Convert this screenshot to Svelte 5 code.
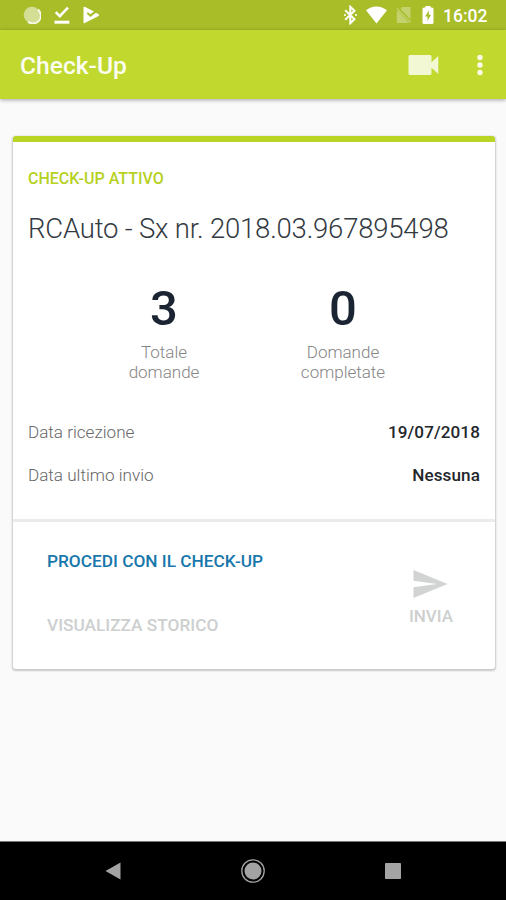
<script lang="ts">
  const stats = [
    { value: 3, lines: ['Totale', 'domande'] },
    { value: 0, lines: ['Domande', 'completate'] },
  ];

  const dates = [
    { label: 'Data ricezione', value: '19/07/2018' },
    { label: 'Data ultimo invio', value: 'Nessuna' },
  ];
</script>

<div class="screen">
  <!-- Status bar -->
  <div class="status">
    <div class="status-left">
      <svg width="18" height="18" viewBox="0 0 18 18">
        <circle cx="9" cy="9" r="8.3" fill="#fff" opacity=".5" />
        <path d="M15 3.5A7.8 7.8 0 0 1 5 15.7" fill="none" stroke="#fff" stroke-width="1.8" opacity=".9" />
      </svg>
      <svg width="16" height="18" viewBox="0 0 16 18" fill="none" stroke="#fff">
        <path d="M1.7 6.2l4.1 4L14 1.6" stroke-width="2.5" />
        <path d="M.5 16.2h14.8" stroke-width="3" />
      </svg>
      <svg width="17" height="18" viewBox="0 0 17 18">
        <path d="M1.7.8Q.5.5.5 1.8v14.4q0 1.5 1.3.9L15.6 9.9q1.2-.9 0-1.7L13 6.8 7.3 11 3.6 7.6 5 6.2l2.3 2L11 5.5z" fill="#fff" />
      </svg>
    </div>
    <div class="status-right">
      <svg class="bluetooth" width="13" height="20" viewBox="0 0 13 20" fill="none" stroke="#fff" stroke-width="2">
        <path d="M1.2 5.2l9.3 9-4.2 4V1.8l4.2 4-9.3 9" />
        <path d="M.2 10h1.6M11.200 10h1.600" />
      </svg>
      <svg class="wifi" width="21" height="18" viewBox="0 0 21 18">
        <path d="M10.5 17.5L0 4.3Q4.6.5 10.5.5T21 4.3z" fill="#fff" />
      </svg>
      <svg class="sim" width="15" height="18" viewBox="0 0 15 18" opacity=".32">
        <path d="M6 1h8.5v12.5L4.5 3zM2 5l11 12H.8V5.8z" fill="#fff" />
        <path d="M.8 2.5l13.7 14" stroke="#fff" stroke-width="1.3" />
      </svg>
      <svg class="battery" width="12" height="20" viewBox="0 0 12 20">
        <path d="M3.5 1h5v1.500H10q1.500 0 1.500 1.500v13.500Q11.500 19 10 19H2Q.5 19 .5 17.500V4Q.5 2.500 2 2.500h1.500z" fill="#fff" />
        <path d="M6.8 5.500L3 11.500h2.500V16L9 9.800H6.800z" fill="#a9bd29" />
      </svg>
      <span class="clock">16:02</span>
    </div>
  </div>

  <!-- App bar -->
  <header class="appbar">
    <h1>Check-Up</h1>
    <svg class="camera" width="31" height="22" viewBox="0 0 31 22">
      <path d="M2 1h20q1.500 0 1.500 1.500v5.800L30.300 2v18l-6.800-6.300v5.800Q23.500 21 22 21H2Q.5 21 .5 19.500v-17Q.5 1 2 1z" fill="#f2f8d4" />
    </svg>
    <svg class="more" width="8" height="22" viewBox="0 0 8 22" fill="#f8fbe8">
      <circle cx="4" cy="3.5" r="2.7" />
      <circle cx="4" cy="11" r="2.7" />
      <circle cx="4" cy="18.5" r="2.7" />
    </svg>
  </header>

  <main>
    <section class="card">
      <div class="summary">
        <p class="eyebrow">CHECK-UP ATTIVO</p>
        <h2>RCAuto - Sx nr. 2018.03.967895498</h2>

        <div class="stats">
          {#each stats as stat}
            <div class="stat">
              <strong>{stat.value}</strong>
              {#each stat.lines as line}
                <span>{line}</span>
              {/each}
            </div>
          {/each}
        </div>

        <dl>
          {#each dates as row}
            <div class="row">
              <dt>{row.label}</dt>
              <dd>{row.value}</dd>
            </div>
          {/each}
        </dl>
      </div>

      <div class="actions">
        <div class="links">
          <button class="proceed">PROCEDI CON IL CHECK-UP</button>
          <button class="history" disabled>VISUALIZZA STORICO</button>
        </div>
        <button class="send" disabled>
          <svg width="35" height="30" viewBox="0 0 35 30">
            <path d="M.5 1L34.500 15 .5 29V18.300L24 15 .5 11.700z" fill="#d2d4d4" />
          </svg>
          <span>INVIA</span>
        </button>
      </div>
    </section>
  </main>

  <!-- System navigation -->
  <nav>
    <svg width="16" height="18" viewBox="0 0 16 18">
      <path d="M.5 9L15.500.5v17z" fill="#a3a3a3" />
    </svg>
    <svg width="24" height="24" viewBox="0 0 24 24">
      <circle cx="12" cy="12" r="11.200" fill="none" stroke="#a3a3a3" stroke-width="1.300" />
      <circle cx="12" cy="12" r="8.500" fill="#a3a3a3" />
    </svg>
    <svg width="16" height="16" viewBox="0 0 16 16">
      <rect width="16" height="16" rx=".8" fill="#a3a3a3" />
    </svg>
  </nav>
</div>

<style>
  :global(body) {
    margin: 0;
    background: #fafafa;
  }

  .screen {
    display: flex;
    flex-direction: column;
    width: 506px;
    height: 900px;
    background: #fafafa;
    font-family: Roboto, sans-serif;
    overflow: hidden;
  }

  h1, h2, p, dl, dd {
    margin: 0;
  }

  svg {
    display: block;
    flex-shrink: 0;
  }

  button {
    padding: 0;
    border: 0;
    background: none;
    font-family: inherit;
    text-align: left;
  }

  /* Status bar */
  .status {
    display: flex;
    justify-content: space-between;
    align-items: center;
    box-sizing: border-box;
    height: 30px;
    padding: 0 18px 0 23px;
    background: #a9bd29;
  }

  .status-left {
    display: flex;
    gap: 13px;
  }

  .status-right {
    display: flex;
    align-items: center;
  }

  .wifi { margin-left: 9px; }
  .sim { margin-left: 9px; }
  .battery { margin-left: 11px; }

  .clock {
    width: 45px;
    margin-left: 9px;
    padding-top: 2px;
    color: #fff;
    font-size: 17.5px;
    font-weight: 500;
    line-height: 20px;
    white-space: nowrap;
  }

  /* App bar */
  .appbar {
    display: flex;
    align-items: center;
    box-sizing: border-box;
    height: 69px;
    padding: 0 22px 0 20px;
    background: #c1d82f;
    box-shadow: 0 1px 4px rgba(0, 0, 0, 0.35);
  }

  h1 {
    flex: 1;
    padding-top: 2px;
    color: #fbfdf0;
    font-size: 24.6px;
    font-weight: 500;
    line-height: 28px;
  }

  .more { margin-left: 37px; }

  /* Card */
  main {
    flex: 1;
    padding: 37px 11px 0 13px;
  }

  .card {
    box-sizing: border-box;
    height: 533px;
    border-top: 6px solid #bad524;
    border-radius: 3px;
    background: #fff;
    box-shadow: 0 1px 2px 1px rgba(0, 0, 0, 0.2);
  }

  .summary {
    box-sizing: border-box;
    height: 380px;
    padding: 27px 15px 0;
    border-bottom: 3px solid #ebebeb;
  }

  .eyebrow {
    color: #b6d11f;
    font-size: 16px;
    font-weight: 500;
    line-height: 20px;
  }

  h2 {
    margin-top: 23px;
    color: #343a42;
    font-size: 27.5px;
    font-weight: 300;
    line-height: 34px;
    letter-spacing: -0.2px;
    white-space: nowrap;
  }

  .stats {
    display: flex;
    justify-content: center;
    margin-top: 35px;
    padding: 0 28px 0 27px;
  }

  .stat {
    display: flex;
    flex-direction: column;
    align-items: center;
    width: 179px;
    color: #858585;
    font-size: 17px;
    font-weight: 300;
    line-height: 20px;
  }

  .stat strong {
    margin-bottom: 5px;
    color: #1b2433;
    font-size: 49px;
    font-weight: 500;
    line-height: 56px;
  }

  dl {
    display: flex;
    flex-direction: column;
    gap: 23px;
    margin-top: 40px;
  }

  .row {
    display: flex;
    justify-content: space-between;
    font-size: 17.1px;
    line-height: 20px;
  }

  dt {
    color: #666;
    font-weight: 300;
  }

  dd {
    color: #23272b;
    font-weight: 500;
    letter-spacing: 0.1px;
  }

  /* Actions */
  .actions {
    display: flex;
    justify-content: space-between;
    padding: 29px 42px 0 34px;
  }

  .links {
    display: flex;
    flex-direction: column;
    gap: 44px;
  }

  .links button,
  .send {
    font-size: 17px;
    font-weight: 500;
    line-height: 20px;
    white-space: nowrap;
  }

  .links button { font-size: 17.25px; }

  .proceed { color: #1877ab; }

  .history,
  .send { color: #cdcfcf; }

  .send {
    display: flex;
    flex-direction: column;
    align-items: center;
    gap: 7px;
    padding-top: 18px;
  }

  /* System navigation */
  nav {
    display: flex;
    justify-content: space-between;
    align-items: center;
    box-sizing: border-box;
    height: 59px;
    padding: 0 105px;
    border-top: 1px solid #777;
    background: #000;
  }
</style>
